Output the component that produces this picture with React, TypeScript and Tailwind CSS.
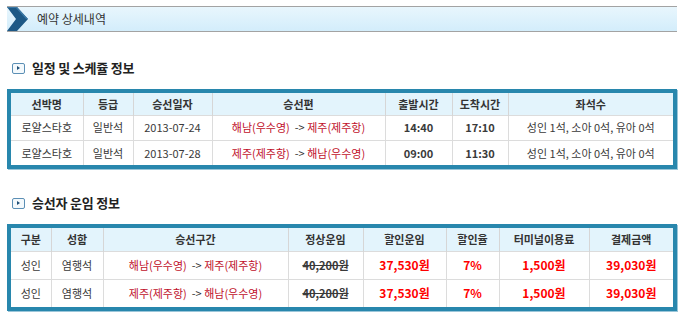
const FONT = "font-['Noto_Sans_CJK_KR','Noto_Sans',sans-serif]";

type Route = { from: string; to: string };

const SCHEDULE = [
  { ship: "로얄스타호", grade: "일반석", date: "2013-07-24", route: { from: "해남(우수영)", to: "제주(제주항)" }, dep: "14:40", arr: "17:10", seats: "성인 1석, 소아 0석, 유아 0석" },
  { ship: "로얄스타호", grade: "일반석", date: "2013-07-28", route: { from: "제주(제주항)", to: "해남(우수영)" }, dep: "09:00", arr: "11:30", seats: "성인 1석, 소아 0석, 유아 0석" },
];

const FARES = [
  { kind: "성인", seat: "염행석", route: { from: "해남(우수영)", to: "제주(제주항)" } },
  { kind: "성인", seat: "염행석", route: { from: "제주(제주항)", to: "해남(우수영)" } },
];

function RouteText({ route }: { route: Route }) {
  return (
    <span>
      <span className="text-[#c0102a]">{route.from}</span>
      <span className="text-[#333]">&nbsp; -&gt; </span>
      <span className="text-[#c0102a]">{route.to}</span>
    </span>
  );
}

function SectionTitle({ label }: { label: string }) {
  return (
    <div className="flex items-center gap-[7px] pl-[5px] h-[16px]">
      <div className="w-[13px] h-[11px] border border-[#5b8fb5] rounded-[2px] bg-[#f4f9fc] flex items-center justify-center">
        <div className="w-0 h-0 border-y-[2.5px] border-y-transparent border-l-[3px] border-l-[#1e4f78]" />
      </div>
      <span className="text-[13px] leading-[16px] font-bold text-[#222] tracking-[-0.2px]">{label}</span>
    </div>
  );
}

const TH = "bg-[#e3f4fc] text-[11px] font-semibold text-[#333] text-center border-l border-[#d6d6d6] first:border-l-0";
const TD = "text-[11px] text-[#3a3a3a] text-center border-l border-t border-[#dcdcdc] first:border-l-0";
const PRICE = "text-[12px] font-bold text-[#ff0000] text-center border-l border-t border-[#dcdcdc]";

export default function App() {
  return (
    <div className={`${FONT} w-[683px] h-[319px] bg-white pt-[6px] pl-[7px] overflow-hidden`}>
      <div className="w-[670px] h-[26px] flex items-center border-y border-[#a3a3a3] bg-gradient-to-b from-[#e8f6fd] to-[#d3edfb]">
        <svg width="22" height="24" viewBox="0 0 22 24" className="shrink-0">
          <polygon points="0,0 10,0 21,12 10,24 0,24 9,12" fill="#1d5885" />
          <polygon points="0,0 10,0 21,12 19,12 9,1 1,1" fill="#3b78a6" />
        </svg>
        <span className="ml-[8px] text-[12px] text-[#333]">예약 상세내역</span>
      </div>

      <div className="mt-[28px]">
        <SectionTitle label="일정 및 스케쥴 정보" />
      </div>

      <div className="mt-[13px] w-[670px] border-[4px] border-[#2887ad] shadow-[1px_1px_0_#9bc6d9]">
        <table className="w-[662px] border-collapse table-fixed">
          <colgroup>
            <col className="w-[72px]" />
            <col className="w-[50px]" />
            <col className="w-[79px]" />
            <col className="w-[173px]" />
            <col className="w-[67px]" />
            <col className="w-[56px]" />
            <col className="w-[165px]" />
          </colgroup>
          <thead>
            <tr className="h-[22px]">
              {["선박명", "등급", "승선일자", "승선편", "출발시간", "도착시간", "좌석수"].map((h) => (
                <th key={h} className={TH}>{h}</th>
              ))}
            </tr>
          </thead>
          <tbody>
            {SCHEDULE.map((r) => (
              <tr key={r.date} className="h-[25px]">
                <td className={TD}>{r.ship}</td>
                <td className={TD}>{r.grade}</td>
                <td className={TD}>{r.date}</td>
                <td className={TD}><RouteText route={r.route} /></td>
                <td className={`${TD} font-semibold`}>{r.dep}</td>
                <td className={`${TD} font-semibold`}>{r.arr}</td>
                <td className={TD}>{r.seats}</td>
              </tr>
            ))}
          </tbody>
        </table>
      </div>

      <div className="mt-[26px]">
        <SectionTitle label="승선자 운임 정보" />
      </div>

      <div className="mt-[13px] w-[670px] border-[4px] border-[#2887ad] shadow-[1px_1px_0_#9bc6d9]">
        <table className="w-[662px] border-collapse table-fixed">
          <colgroup>
            <col className="w-[40px]" />
            <col className="w-[52px]" />
            <col className="w-[185px]" />
            <col className="w-[75px]" />
            <col className="w-[83px]" />
            <col className="w-[53px]" />
            <col className="w-[90px]" />
            <col className="w-[84px]" />
          </colgroup>
          <thead>
            <tr className="h-[23px]">
              {["구분", "성함", "승선구간", "정상운임", "할인운임", "할인율", "터미널이용료", "결제금액"].map((h) => (
                <th key={h} className={TH}>{h}</th>
              ))}
            </tr>
          </thead>
          <tbody>
            {FARES.map((r, i) => (
              <tr key={i} className="h-[28px]">
                <td className={TD}>{r.kind}</td>
                <td className={TD}>{r.seat}</td>
                <td className={TD}><RouteText route={r.route} /></td>
                <td className={`${TD} font-bold line-through`}>40,200원</td>
                <td className={PRICE}>37,530원</td>
                <td className={PRICE}>7%</td>
                <td className={PRICE}>1,500원</td>
                <td className={PRICE}>39,030원</td>
              </tr>
            ))}
          </tbody>
        </table>
      </div>
    </div>
  );
}
